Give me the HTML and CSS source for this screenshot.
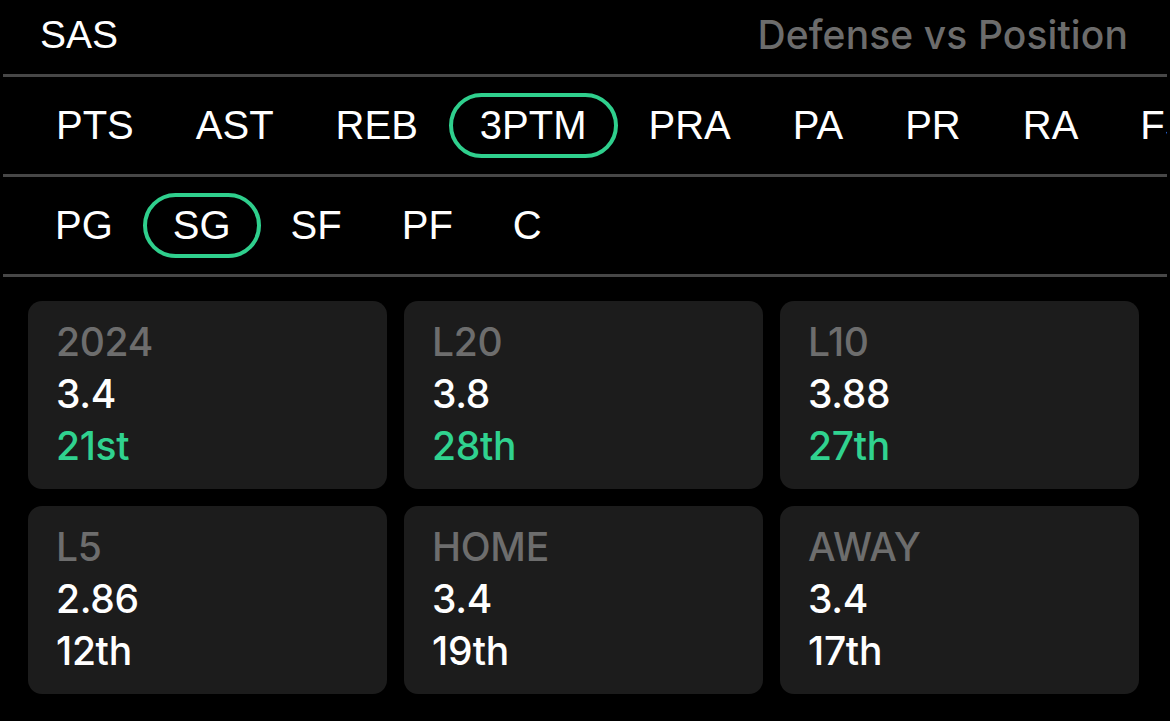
FILE: index.html
```html
<!DOCTYPE html>
<html lang="en">
<head>
<meta charset="utf-8">
<title>SAS Defense vs Position</title>
<link rel="stylesheet" href="styles.css">
</head>
<body>
<div class="page">
  <header class="header">
    <div class="team">SAS</div>
    <div class="title">Defense vs Position</div>
  </header>
  <nav class="tabs">
    <span class="tab">PTS</span>
    <span class="tab">AST</span>
    <span class="tab">REB</span>
    <span class="tab active">3PTM</span>
    <span class="tab">PRA</span>
    <span class="tab">PA</span>
    <span class="tab">PR</span>
    <span class="tab">RA</span>
    <span class="tab">FS</span>
  </nav>
  <nav class="tabs positions">
    <span class="tab">PG</span>
    <span class="tab active">SG</span>
    <span class="tab">SF</span>
    <span class="tab">PF</span>
    <span class="tab">C</span>
  </nav>
  <section class="cards">
    <div class="card">
      <div class="label">2024</div>
      <div class="value">3.4</div>
      <div class="rank good">21st</div>
    </div>
    <div class="card">
      <div class="label">L20</div>
      <div class="value">3.8</div>
      <div class="rank good">28th</div>
    </div>
    <div class="card">
      <div class="label">L10</div>
      <div class="value">3.88</div>
      <div class="rank good">27th</div>
    </div>
    <div class="card">
      <div class="label">L5</div>
      <div class="value">2.86</div>
      <div class="rank">12th</div>
    </div>
    <div class="card">
      <div class="label">HOME</div>
      <div class="value">3.4</div>
      <div class="rank">19th</div>
    </div>
    <div class="card">
      <div class="label">AWAY</div>
      <div class="value">3.4</div>
      <div class="rank">17th</div>
    </div>
  </section>
</div>
</body>
</html>
```

FILE: styles.css
```css
html, body {
  margin: 0;
  padding: 0;
  background: #000;
}

body {
  width: 1170px;
  height: 721px;
  overflow: hidden;
  color: #fff;
  font-family: "Liberation Sans", Arial, sans-serif;
}

.page {
  margin: 0 3px;
}

.header {
  height: 77px;
  box-sizing: border-box;
  display: flex;
  align-items: center;
  justify-content: space-between;
  padding: 0 39px 5px 37px;
  border-bottom: 3px solid #474747;
}

.team {
  font-size: 39px;
  line-height: 44px;
  color: #fff;
}

.title {
  font-family: "Inter", "Liberation Sans", sans-serif;
  font-weight: 500;
  font-size: 39px;
  line-height: 44px;
  color: #6c6c6c;
  letter-spacing: 0.1px;
}

.tabs {
  height: 100px;
  box-sizing: border-box;
  display: flex;
  align-items: center;
  padding-left: 22px;
  border-bottom: 3px solid #474747;
  overflow: hidden;
  white-space: nowrap;
}

.tab {
  flex: none;
  height: 65px;
  box-sizing: border-box;
  display: flex;
  align-items: center;
  padding: 0 27px;
  border: 4px solid transparent;
  border-radius: 33px;
  font-size: 40px;
  color: #fff;
}

.positions .tab {
  padding: 0 26px;
}

.tab.active {
  border-color: #2fcf8d;
}

.cards {
  display: grid;
  grid-template-columns: repeat(3, 359px);
  column-gap: 17px;
  row-gap: 17px;
  padding: 24px 0 0 25px;
}

.card {
  height: 188px;
  box-sizing: border-box;
  background: #1c1c1c;
  border-radius: 14px;
  padding: 15px 28px 17px;
  font-family: "Inter", "Liberation Sans", sans-serif;
  font-weight: 500;
  font-size: 39px;
  line-height: 52px;
  letter-spacing: -0.3px;
}

.label {
  color: #6d6d6d;
}

.value {
  color: #fff;
}

.rank {
  color: #fff;
}

.rank.good {
  color: #30d28f;
}
```
